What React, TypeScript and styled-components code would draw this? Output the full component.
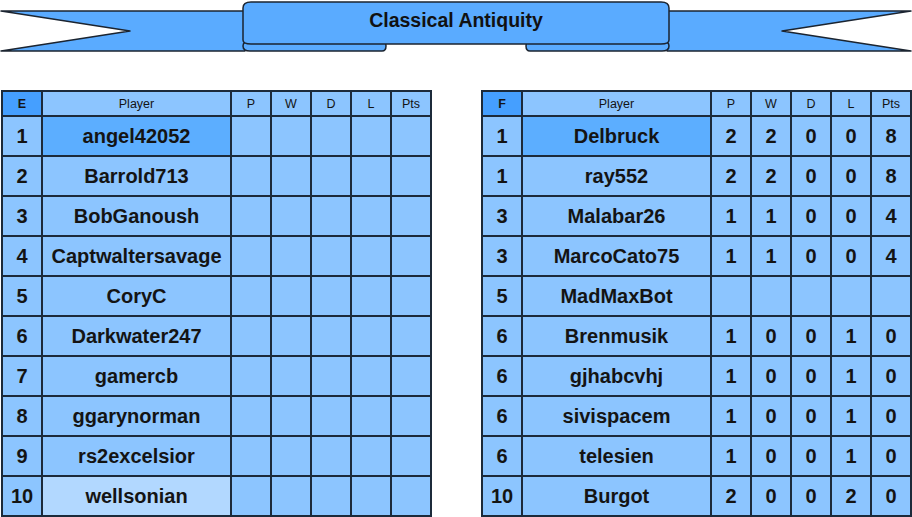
import React from 'react';
import styled, { createGlobalStyle } from 'styled-components';

const GlobalStyle = createGlobalStyle`
    html, body {
        margin: 0;
        padding: 0;
        background: #ffffff;
        font-family: "Liberation Sans", Arial, sans-serif;
    }
`;

const Page = styled.div`
    width: 912px;
    height: 517px;
    overflow: hidden;
`;

const BannerWrap = styled.div`
    position: relative;
    width: 912px;
    height: 55px;
    margin-bottom: 35px;
`;

const BannerTitle = styled.div`
    position: absolute;
    left: 243px;
    top: 4px;
    width: 426px;
    height: 32px;
    display: flex;
    align-items: center;
    justify-content: center;
    font-size: 19.5px;
    font-weight: bold;
    color: #111;
`;

const Tables = styled.div`
    display: flex;
    gap: 49px;
    padding-left: 1px;
`;

const Grid = styled.div`
    display: grid;
    grid-template-columns: 38px 187px repeat(5, 38px);
    grid-template-rows: 23px repeat(10, 38px);
    gap: 2px;
    padding: 2px;
    background: #1c2a3a;
`;

type CellKind = 'normal' | 'hi' | 'light' | 'group';

const fills: Record<CellKind, string> = {
    normal: '#8cc5ff',
    hi: '#5caeff',
    light: '#b2d8ff',
    group: '#459fff',
};

const Cell = styled.div<{ $kind?: CellKind; $head?: boolean; $bold?: boolean }>`
    background: ${({ $kind }) => fills[$kind || 'normal']};
    display: flex;
    align-items: center;
    justify-content: center;
    color: #141414;
    font-size: ${({ $head }) => ($head ? '12.5px' : '20px')};
    font-weight: ${({ $head, $bold }) => (!$head || $bold ? 'bold' : 'normal')};
    white-space: nowrap;
    padding-top: 1px;
`;

type Row = { rank: string; name: string; stats?: string[] };

const leftRows: Row[] = [
    { rank: '1', name: 'angel42052' },
    { rank: '2', name: 'Barrold713' },
    { rank: '3', name: 'BobGanoush' },
    { rank: '4', name: 'Captwaltersavage' },
    { rank: '5', name: 'CoryC' },
    { rank: '6', name: 'Darkwater247' },
    { rank: '7', name: 'gamercb' },
    { rank: '8', name: 'ggarynorman' },
    { rank: '9', name: 'rs2excelsior' },
    { rank: '10', name: 'wellsonian' },
];

const rightRows: Row[] = [
    { rank: '1', name: 'Delbruck', stats: ['2', '2', '0', '0', '8'] },
    { rank: '1', name: 'ray552', stats: ['2', '2', '0', '0', '8'] },
    { rank: '3', name: 'Malabar26', stats: ['1', '1', '0', '0', '4'] },
    { rank: '3', name: 'MarcoCato75', stats: ['1', '1', '0', '0', '4'] },
    { rank: '5', name: 'MadMaxBot' },
    { rank: '6', name: 'Brenmusik', stats: ['1', '0', '0', '1', '0'] },
    { rank: '6', name: 'gjhabcvhj', stats: ['1', '0', '0', '1', '0'] },
    { rank: '6', name: 'sivispacem', stats: ['1', '0', '0', '1', '0'] },
    { rank: '6', name: 'telesien', stats: ['1', '0', '0', '1', '0'] },
    { rank: '10', name: 'Burgot', stats: ['2', '0', '0', '2', '0'] },
];

const Banner = () => (
    <BannerWrap>
        <svg width="912" height="55" viewBox="0 0 912 55">
            <g fill="#5aabff" stroke="#1b2430" strokeWidth="1.5" strokeLinejoin="round">
                <polygon points="1,11 245,11 245,51 1,51 130,31" />
                <polygon points="911,11 667,11 667,51 911,51 782,31" />
                <path d="M250,41 L382,41 Q386,41 386,46 Q386,51 382,51 L250,51 Q243,51 243,46 Q243,41 250,41 Z" />
                <path d="M662,41 L530,41 Q526,41 526,46 Q526,51 530,51 L662,51 Q669,51 669,46 Q669,41 662,41 Z" />
                <path d="M251,2 L661,2 Q669,2 669,8 L669,40 Q669,44 661,44 L251,44 Q243,44 243,40 L243,8 Q243,2 251,2 Z" />
            </g>
        </svg>
        <BannerTitle>Classical Antiquity</BannerTitle>
    </BannerWrap>
);

const Standings = ({ group, rows, lightLast }: { group: string; rows: Row[]; lightLast?: boolean }) => (
    <Grid>
        <Cell $head $bold $kind="group">{group}</Cell>
        <Cell $head>Player</Cell>
        <Cell $head>P</Cell>
        <Cell $head>W</Cell>
        <Cell $head>D</Cell>
        <Cell $head>L</Cell>
        <Cell $head>Pts</Cell>
        {rows.map((r, i) => (
            <React.Fragment key={i}>
                <Cell>{r.rank}</Cell>
                <Cell $kind={i === 0 ? 'hi' : lightLast && i === rows.length - 1 ? 'light' : 'normal'}>{r.name}</Cell>
                {[0, 1, 2, 3, 4].map((k) => (
                    <Cell key={k}>{r.stats ? r.stats[k] : ''}</Cell>
                ))}
            </React.Fragment>
        ))}
    </Grid>
);

export default function App() {
    return (
        <Page>
            <GlobalStyle />
            <Banner />
            <Tables>
                <Standings group="E" rows={leftRows} lightLast />
                <Standings group="F" rows={rightRows} />
            </Tables>
        </Page>
    );
}
